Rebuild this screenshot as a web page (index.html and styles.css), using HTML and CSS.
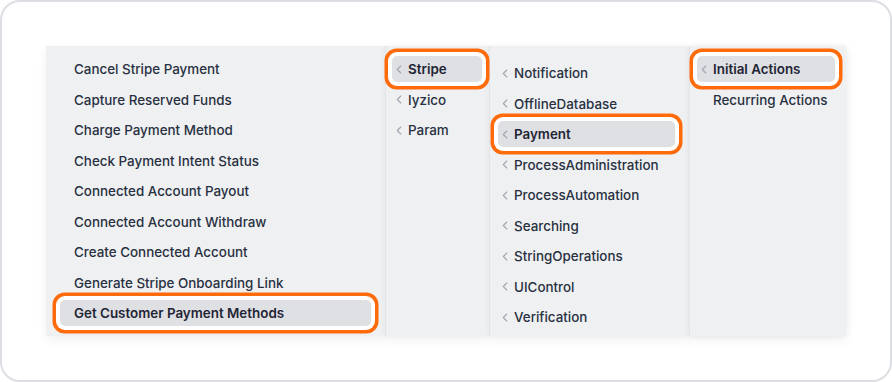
FILE: index.html
```html
<!DOCTYPE html>
<html>
<head>
<meta charset="utf-8">
<link rel="stylesheet" href="styles.css">
</head>
<body>
<div class="card">
  <div class="menu">
    <ul class="col col1">
      <li class="item">Cancel Stripe Payment</li>
      <li class="item">Capture Reserved Funds</li>
      <li class="item">Charge Payment Method</li>
      <li class="item">Check Payment Intent Status</li>
      <li class="item">Connected Account Payout</li>
      <li class="item">Connected Account Withdraw</li>
      <li class="item">Create Connected Account</li>
      <li class="item">Generate Stripe Onboarding Link</li>
      <li class="item active">Get Customer Payment Methods</li>
    </ul>
    <ul class="col col2">
      <li class="item active"><svg class="chev" viewBox="0 0 6 9"><polyline points="4.8,1 1.3,4.5 4.8,8"/></svg>Stripe</li>
      <li class="item"><svg class="chev" viewBox="0 0 6 9"><polyline points="4.8,1 1.3,4.5 4.8,8"/></svg>Iyzico</li>
      <li class="item"><svg class="chev" viewBox="0 0 6 9"><polyline points="4.8,1 1.3,4.5 4.8,8"/></svg>Param</li>
    </ul>
    <ul class="col col3">
      <li class="item"><svg class="chev" viewBox="0 0 6 9"><polyline points="4.8,1 1.3,4.5 4.8,8"/></svg>Notification</li>
      <li class="item"><svg class="chev" viewBox="0 0 6 9"><polyline points="4.8,1 1.3,4.5 4.8,8"/></svg>OfflineDatabase</li>
      <li class="item active"><svg class="chev" viewBox="0 0 6 9"><polyline points="4.8,1 1.3,4.5 4.8,8"/></svg>Payment</li>
      <li class="item"><svg class="chev" viewBox="0 0 6 9"><polyline points="4.8,1 1.3,4.5 4.8,8"/></svg>ProcessAdministration</li>
      <li class="item"><svg class="chev" viewBox="0 0 6 9"><polyline points="4.8,1 1.3,4.5 4.8,8"/></svg>ProcessAutomation</li>
      <li class="item"><svg class="chev" viewBox="0 0 6 9"><polyline points="4.8,1 1.3,4.5 4.8,8"/></svg>Searching</li>
      <li class="item"><svg class="chev" viewBox="0 0 6 9"><polyline points="4.8,1 1.3,4.5 4.8,8"/></svg>StringOperations</li>
      <li class="item"><svg class="chev" viewBox="0 0 6 9"><polyline points="4.8,1 1.3,4.5 4.8,8"/></svg>UIControl</li>
      <li class="item"><svg class="chev" viewBox="0 0 6 9"><polyline points="4.8,1 1.3,4.5 4.8,8"/></svg>Verification</li>
    </ul>
    <ul class="col col4">
      <li class="item active"><svg class="chev" viewBox="0 0 6 9"><polyline points="4.8,1 1.3,4.5 4.8,8"/></svg>Initial Actions</li>
      <li class="item"><span class="chev-space"></span>Recurring Actions</li>
    </ul>
  </div>
</div>
</body>
</html>
```
FILE: styles.css
```css
* { box-sizing: border-box; }
html, body { margin: 0; padding: 0; background: #ffffff; }
body {
  font-family: Inter, "Noto Sans", sans-serif;
  width: 892px;
  height: 382px;
}
.card {
  width: 892px;
  height: 382px;
  border: 2px solid #dcdee3;
  border-radius: 20px;
  background: #ffffff;
  padding: 44px 0 0 44px;
}
.menu {
  display: flex;
  width: 800px;
  height: 290px;
  background: #eff0f2;
  box-shadow: 0 4px 10px rgba(20, 24, 40, 0.06);
}
.col {
  list-style: none;
  margin: 0;
  display: flex;
  flex-direction: column;
  gap: 4.5px;
  height: 290px;
  background: #eff0f2;
}
.col1 { width: 339px; padding: 10px 14px 0 14px; }
.col2 { width: 104px; padding: 10px 7px 0 6px; border-left: 1px solid #e3e4e8; box-shadow: -2px 0 5px rgba(0,0,0,0.03); }
.col3 { width: 200px; padding: 14px 14px 0 8px; border-left: 1px solid #e3e4e8; box-shadow: -2px 0 5px rgba(0,0,0,0.03); }
.col4 { width: 157px; padding: 10px 11px 0 7px; border-left: 1px solid #e3e4e8; box-shadow: -2px 0 5px rgba(0,0,0,0.03), 2px 0 6px rgba(0,0,0,0.04); }
.item {
  display: flex;
  align-items: center;
  height: 26px;
  flex: 0 0 26px;
  padding-left: 4px;
  font-size: 13.4px;
  font-weight: 500;
  color: #283041;
  white-space: nowrap;
  border-radius: 5px;
}
.col1 .item { padding-left: 14px; }
.chev {
  width: 6px;
  height: 9px;
  margin-right: 6px;
  flex: none;
  fill: none;
  stroke: #a0a5ae;
  stroke-width: 1.1;
  stroke-linecap: round;
  stroke-linejoin: round;
}
.chev-space { width: 6px; margin-right: 6px; flex: none; }
.item.active {
  position: relative;
  z-index: 2;
  background: #dfe0e4;
  font-weight: 600;
  color: #1f2535;
  box-shadow: 0 0 0 4px #ffffff, 0 0 0 7.5px #ff6b0a;
}
```
